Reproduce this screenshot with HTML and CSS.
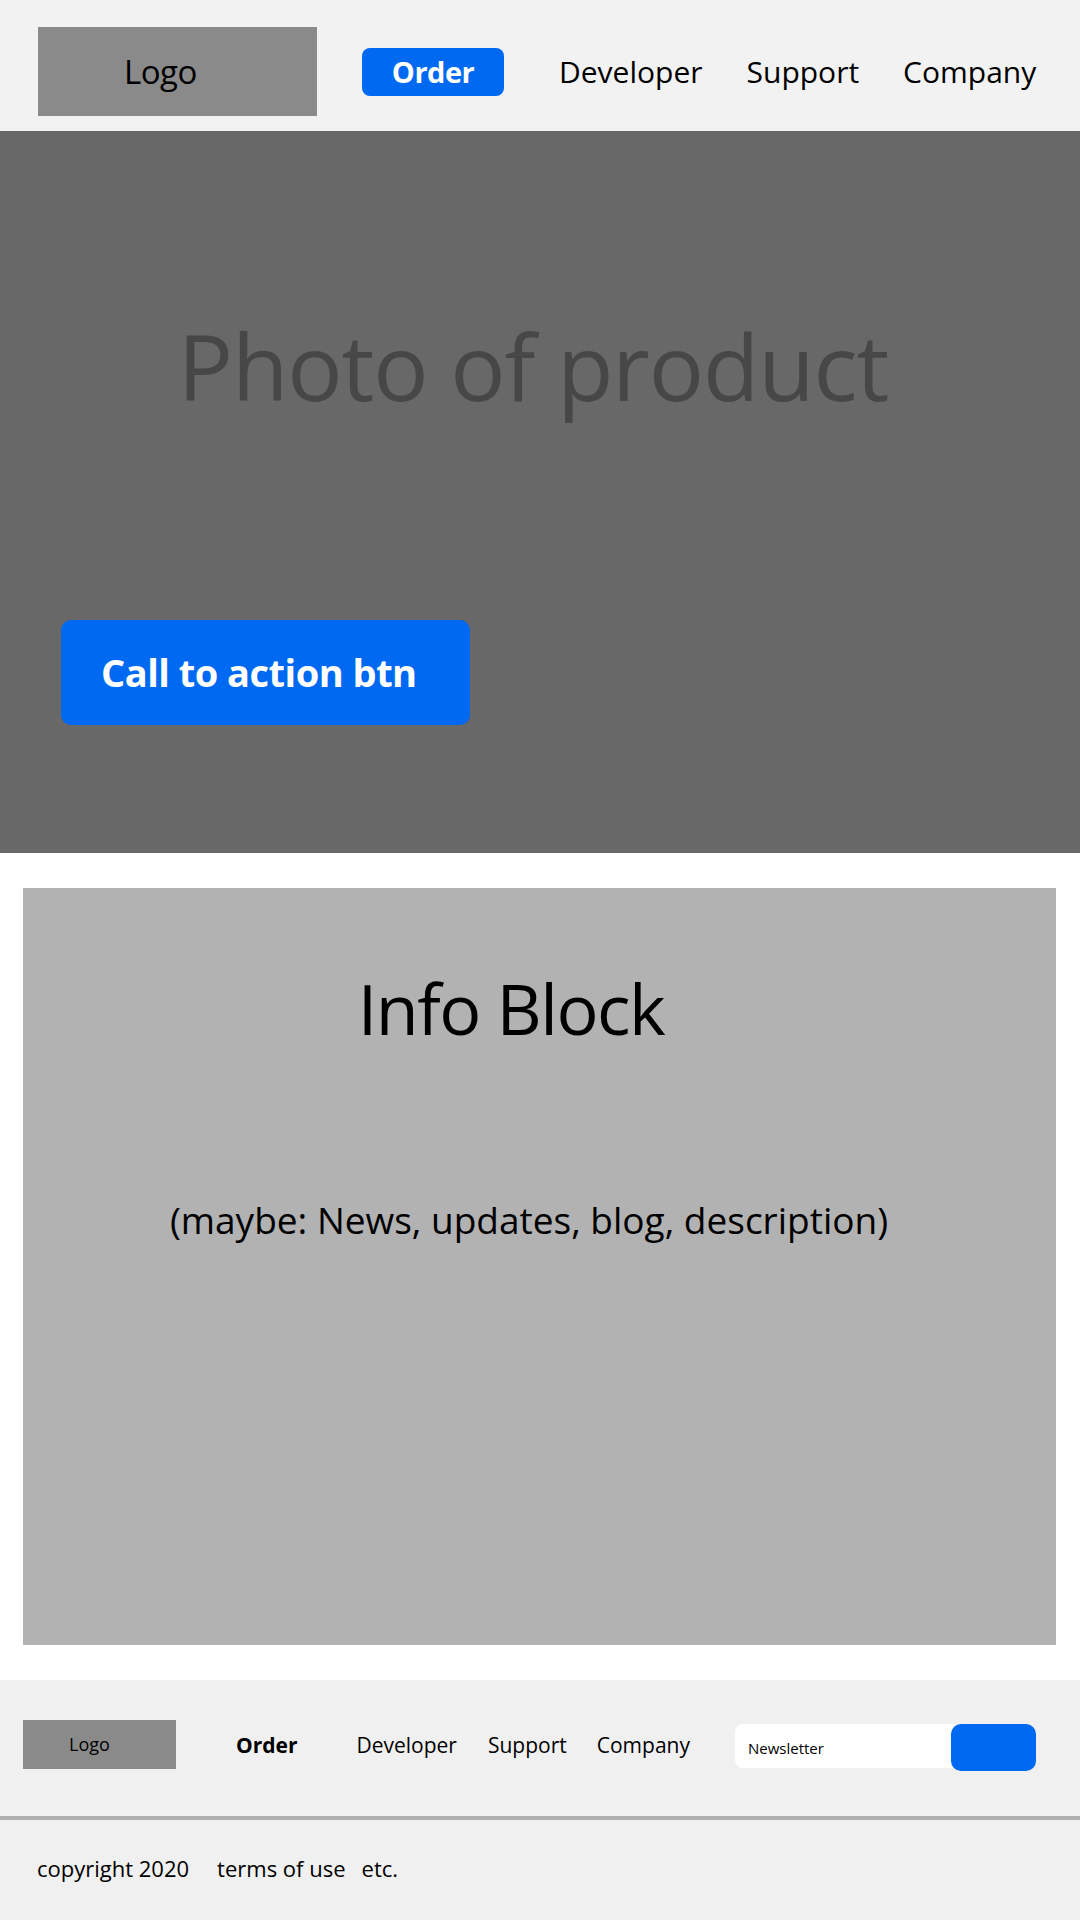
FILE: index.html
```html
<!DOCTYPE html>
<html lang="en">
<head>
<meta charset="utf-8">
<title>Product page wireframe</title>
<link rel="stylesheet" href="styles.css">
</head>
<body>
<header class="topbar">
  <div class="logo-box">Logo</div>
  <nav class="main-nav">
    <a class="order-btn" href="#">Order</a>
    <a class="nav-link nav-first" href="#">Developer</a>
    <a class="nav-link" href="#">Support</a>
    <a class="nav-link" href="#">Company</a>
  </nav>
</header>

<section class="hero">
  <h1 class="hero-title">Photo of product</h1>
  <a class="cta-btn" href="#">Call to action btn</a>
</section>

<main class="content">
  <section class="info-block">
    <h2 class="info-title">Info Block</h2>
    <p class="info-sub">(maybe: News, updates, blog, description)</p>
  </section>
</main>

<footer class="footer">
  <div class="footer-top">
    <div class="footer-logo">Logo</div>
    <a class="f-link f-order" href="#">Order</a>
    <a class="f-link f-dev" href="#">Developer</a>
    <a class="f-link f-sup" href="#">Support</a>
    <a class="f-link f-comp" href="#">Company</a>
    <form class="newsletter">
      <div class="news-input">Newsletter</div>
      <div class="news-btn"></div>
    </form>
  </div>
  <div class="footer-bottom"><span class="copy">copyright 2020</span><span class="terms">terms of use</span><span class="etc">etc.</span></div>
</footer>
</body>
</html>
```

FILE: styles.css
```css
* { box-sizing: border-box; }
html, body { margin: 0; padding: 0; }
body {
  width: 1080px;
  background: #ffffff;
  font-family: "Open Sans", "Noto Sans", sans-serif;
  color: #000;
}
a { text-decoration: none; color: inherit; }

/* header */
.topbar {
  height: 131px;
  padding-top: 12px;
  background: #f2f2f2;
  display: flex;
  align-items: center;
}
.logo-box {
  width: 279px;
  height: 89px;
  margin-left: 38px;
  background: #8a8a8a;
  font-size: 33px;
  line-height: 89px;
  padding-left: 86px;
  letter-spacing: -0.5px;
}
.main-nav {
  display: flex;
  align-items: center;
  margin-left: 45px;
}
.order-btn {
  width: 142px;
  height: 48px;
  border-radius: 8px;
  background: #0069f2;
  color: #fff;
  font-weight: 700;
  font-size: 29px;
  line-height: 48px;
  text-align: center;
  letter-spacing: -0.5px;
}
.nav-link {
  font-size: 30px;
  line-height: 48px;
  margin-left: 44px;
}
.nav-link.nav-first { margin-left: 55px; }

/* hero */
.hero {
  height: 722px;
  background: #686868;
  padding-top: 189px;
  display: flex;
  flex-direction: column;
  align-items: flex-start;
}
.hero-title {
  align-self: stretch;
  margin: 0;
  padding-right: 14px;
  font-size: 92px;
  line-height: 92px;
  font-weight: 400;
  letter-spacing: -1.1px;
  color: #474747;
  text-align: center;
}
.cta-btn {
  margin-top: 208px;
  margin-left: 61px;
  width: 409px;
  height: 105px;
  border-radius: 10px;
  background: #0069f2;
  color: #fff;
  font-weight: 700;
  font-size: 38px;
  line-height: 105px;
  letter-spacing: -0.5px;
  padding-left: 40px;
}

/* info */
.content {
  padding: 35px 24px 35px 23px;
}
.info-block {
  height: 757px;
  background: #b2b2b2;
  padding-top: 85px;
}
.info-title {
  margin: 0;
  font-size: 70px;
  line-height: 70px;
  font-weight: 400;
  letter-spacing: -1.5px;
  text-align: center;
  padding-right: 57px;
}
.info-sub {
  margin: 158px 0 0;
  font-size: 37px;
  line-height: 37px;
  text-align: center;
  padding-right: 21px;
}

/* footer */
.footer { background: #f0f0f0; }
.footer-top {
  height: 136px;
  padding-bottom: 7px;
  display: flex;
  align-items: center;
}
.footer-logo {
  width: 153px;
  height: 49px;
  margin-left: 23px;
  background: #8a8a8a;
  font-size: 18px;
  line-height: 49px;
  padding-left: 46px;
}
.f-link {
  font-size: 21px;
  line-height: 30px;
}
.f-order { font-weight: 700; margin-left: 60px; }
.f-dev { margin-left: 59px; }
.f-sup { margin-left: 31px; }
.f-comp { margin-left: 30px; }
.newsletter {
  margin: 5px 0 0 45px;
  display: flex;
  align-items: flex-start;
  height: 47px;
}
.news-input {
  width: 219px;
  height: 44px;
  background: #fff;
  border-radius: 8px 0 0 8px;
  font-size: 15px;
  line-height: 48px;
  padding-left: 13px;
}
.news-btn {
  width: 85px;
  height: 47px;
  margin-left: -3px;
  background: #0069f2;
  border-radius: 10px;
}
.footer-bottom {
  height: 104px;
  border-top: 4px solid #b0b0b0;
  padding: 33px 0 0 37px;
  font-size: 22px;
  line-height: 30px;
}
.terms { margin-left: 28px; }
.etc { margin-left: 16px; }
```
